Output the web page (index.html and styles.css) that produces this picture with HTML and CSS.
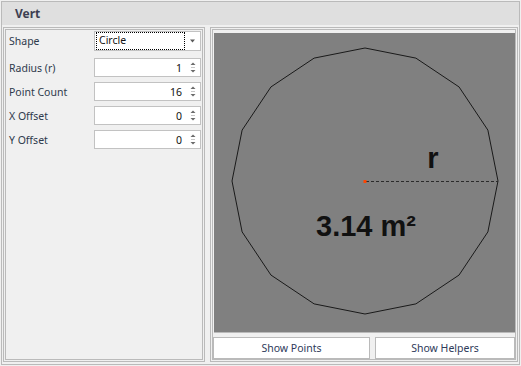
FILE: index.html
```html
<!DOCTYPE html>
<html>
<head>
<meta charset="utf-8">
<link rel="stylesheet" href="styles.css">
</head>
<body>
<div class="win">
  <div class="frame">
    <div class="header">Vert</div>
    <div class="body">
      <div class="left">
        <div class="row row-shape">
          <span class="lbl">Shape</span>
          <div class="combo">
            <span class="focus">Circle</span>
            <span class="drop"><svg width="6" height="4" viewBox="0 0 6 4"><path d="M0 0.5H5L2.5 3.5Z" fill="#5a5a5a"/></svg></span>
          </div>
        </div>
        <div class="row">
          <span class="lbl">Radius (r)</span>
          <div class="spin"><span class="val">1</span><span class="arrows"><svg width="6" height="11" viewBox="0 0 6 11"><path d="M0.5 3H5.5L3 0.5Z" fill="#6a6a6a"/><path d="M0.5 8H5.5L3 10.5Z" fill="#6a6a6a"/><rect x="1" y="5" width="4" height="1" fill="#c8c8c8"/></svg></span></div>
        </div>
        <div class="row">
          <span class="lbl">Point Count</span>
          <div class="spin"><span class="val">16</span><span class="arrows"><svg width="6" height="11" viewBox="0 0 6 11"><path d="M0.5 3H5.5L3 0.5Z" fill="#6a6a6a"/><path d="M0.5 8H5.5L3 10.5Z" fill="#6a6a6a"/><rect x="1" y="5" width="4" height="1" fill="#c8c8c8"/></svg></span></div>
        </div>
        <div class="row">
          <span class="lbl">X Offset</span>
          <div class="spin"><span class="val">0</span><span class="arrows"><svg width="6" height="11" viewBox="0 0 6 11"><path d="M0.5 3H5.5L3 0.5Z" fill="#6a6a6a"/><path d="M0.5 8H5.5L3 10.5Z" fill="#6a6a6a"/><rect x="1" y="5" width="4" height="1" fill="#c8c8c8"/></svg></span></div>
        </div>
        <div class="row">
          <span class="lbl">Y Offset</span>
          <div class="spin"><span class="val">0</span><span class="arrows"><svg width="6" height="11" viewBox="0 0 6 11"><path d="M0.5 3H5.5L3 0.5Z" fill="#6a6a6a"/><path d="M0.5 8H5.5L3 10.5Z" fill="#6a6a6a"/><rect x="1" y="5" width="4" height="1" fill="#c8c8c8"/></svg></span></div>
        </div>
      </div>
      <div class="right">
        <div class="canvas">
          <svg width="301" height="299" viewBox="0 0 301 299">
            <polygon fill="none" stroke="#1a1a1a" stroke-width="1" stroke-linejoin="round"
              points="284,148 273.88,198.9 245.05,242.05 201.9,270.88 151,281 100.1,270.88 56.95,242.05 28.12,198.9 18,148 28.12,97.1 56.95,53.95 100.1,25.12 151,15 201.9,25.12 245.05,53.95 273.88,97.1"/>
            <line x1="152" y1="148.5" x2="284" y2="148.5" stroke="#2a2a2a" stroke-width="1.2" stroke-dasharray="3 2"/>
            <rect x="149.5" y="147" width="3" height="3" fill="#ff4500"/>
            <text class="lbl-r" x="219" y="135" text-anchor="middle">r</text>
            <text class="lbl-area" x="152" y="203" text-anchor="middle">3.14 m²</text>
          </svg>
        </div>
        <div class="buttons">
          <button class="btn btn-points">Show Points</button>
          <button class="btn btn-helpers">Show Helpers</button>
        </div>
      </div>
    </div>
  </div>
</div>
</body>
</html>
```

FILE: styles.css
```css
html, body {
  margin: 0;
  padding: 0;
  background: #f0f0f0;
}
.win {
  width: 521px;
  height: 366px;
  box-sizing: border-box;
  padding: 1px;
  font-family: "Noto Sans", "Liberation Sans", sans-serif;
  font-size: 10.5px;
  color: #2e3a4c;
}
.frame {
  height: 100%;
  box-sizing: border-box;
  border: 1px solid #bababa;
  display: flex;
  flex-direction: column;
}
.header {
  height: 23px;
  line-height: 23px;
  background: #dfdfdf;
  padding-left: 13px;
  font-weight: bold;
  font-size: 12px;
  color: #3d3f52;
}
.body {
  flex: 1;
  display: flex;
  gap: 5px;
  padding: 2px 1px 2px 1px;
  min-height: 0;
}
.left {
  width: 202px;
  box-sizing: border-box;
  border: 3px double #bababa;
  padding: 1px 1px 0 3px;
  display: flex;
  flex-direction: column;
  gap: 5px;
}
.row {
  display: flex;
  align-items: center;
  height: 19px;
}
.row-shape {
  height: 20px;
  margin-bottom: 2px;
}
.lbl {
  width: 85px;
  flex: none;
}
.combo, .spin {
  width: 107px;
  height: 100%;
  box-sizing: border-box;
  border: 1px solid #c2c2c2;
  background: #fff;
  display: flex;
  align-items: center;
}
.focus {
  width: 89px;
  height: 18px;
  box-sizing: border-box;
  margin-left: 1px;
  border: 1px dotted #000;
  padding-left: 2px;
  line-height: 15px;
  color: #111;
}
.drop {
  flex: 1;
  display: flex;
  justify-content: center;
  align-items: center;
  padding-left: 1px;
}
.drop svg { display: block; }
.val {
  flex: 1;
  text-align: right;
  padding-right: 3px;
  color: #111;
}
.arrows {
  width: 15px;
  flex: none;
  display: flex;
  justify-content: center;
}
.arrows svg { display: block; }
.right {
  flex: 1;
  box-sizing: border-box;
  border: 3px double #bababa;
  display: flex;
  flex-direction: column;
}
.canvas {
  margin: 3px 0 0 1px;
  height: 299px;
  background: #808080;
  border-bottom: 1px solid #bababa;
}
.canvas svg { display: block; }
.lbl-r, .lbl-area {
  font-family: "Liberation Sans", Arial, sans-serif;
  font-weight: bold;
  fill: #111;
}
.lbl-r { font-size: 29px; }
.lbl-area { font-size: 29px; }
.buttons {
  margin-top: 4px;
  display: flex;
  gap: 5px;
  height: 22px;
}
.btn {
  box-sizing: border-box;
  height: 22px;
  margin: 0;
  padding: 0;
  border: 1px solid #bababa;
  background: #fff;
  font-family: "Noto Sans", "Liberation Sans", sans-serif;
  font-size: 10.5px;
  color: #2e3a5a;
  border-radius: 0;
}
.btn-points { width: 157px; flex: none; }
.btn-helpers { flex: 1; }
```
